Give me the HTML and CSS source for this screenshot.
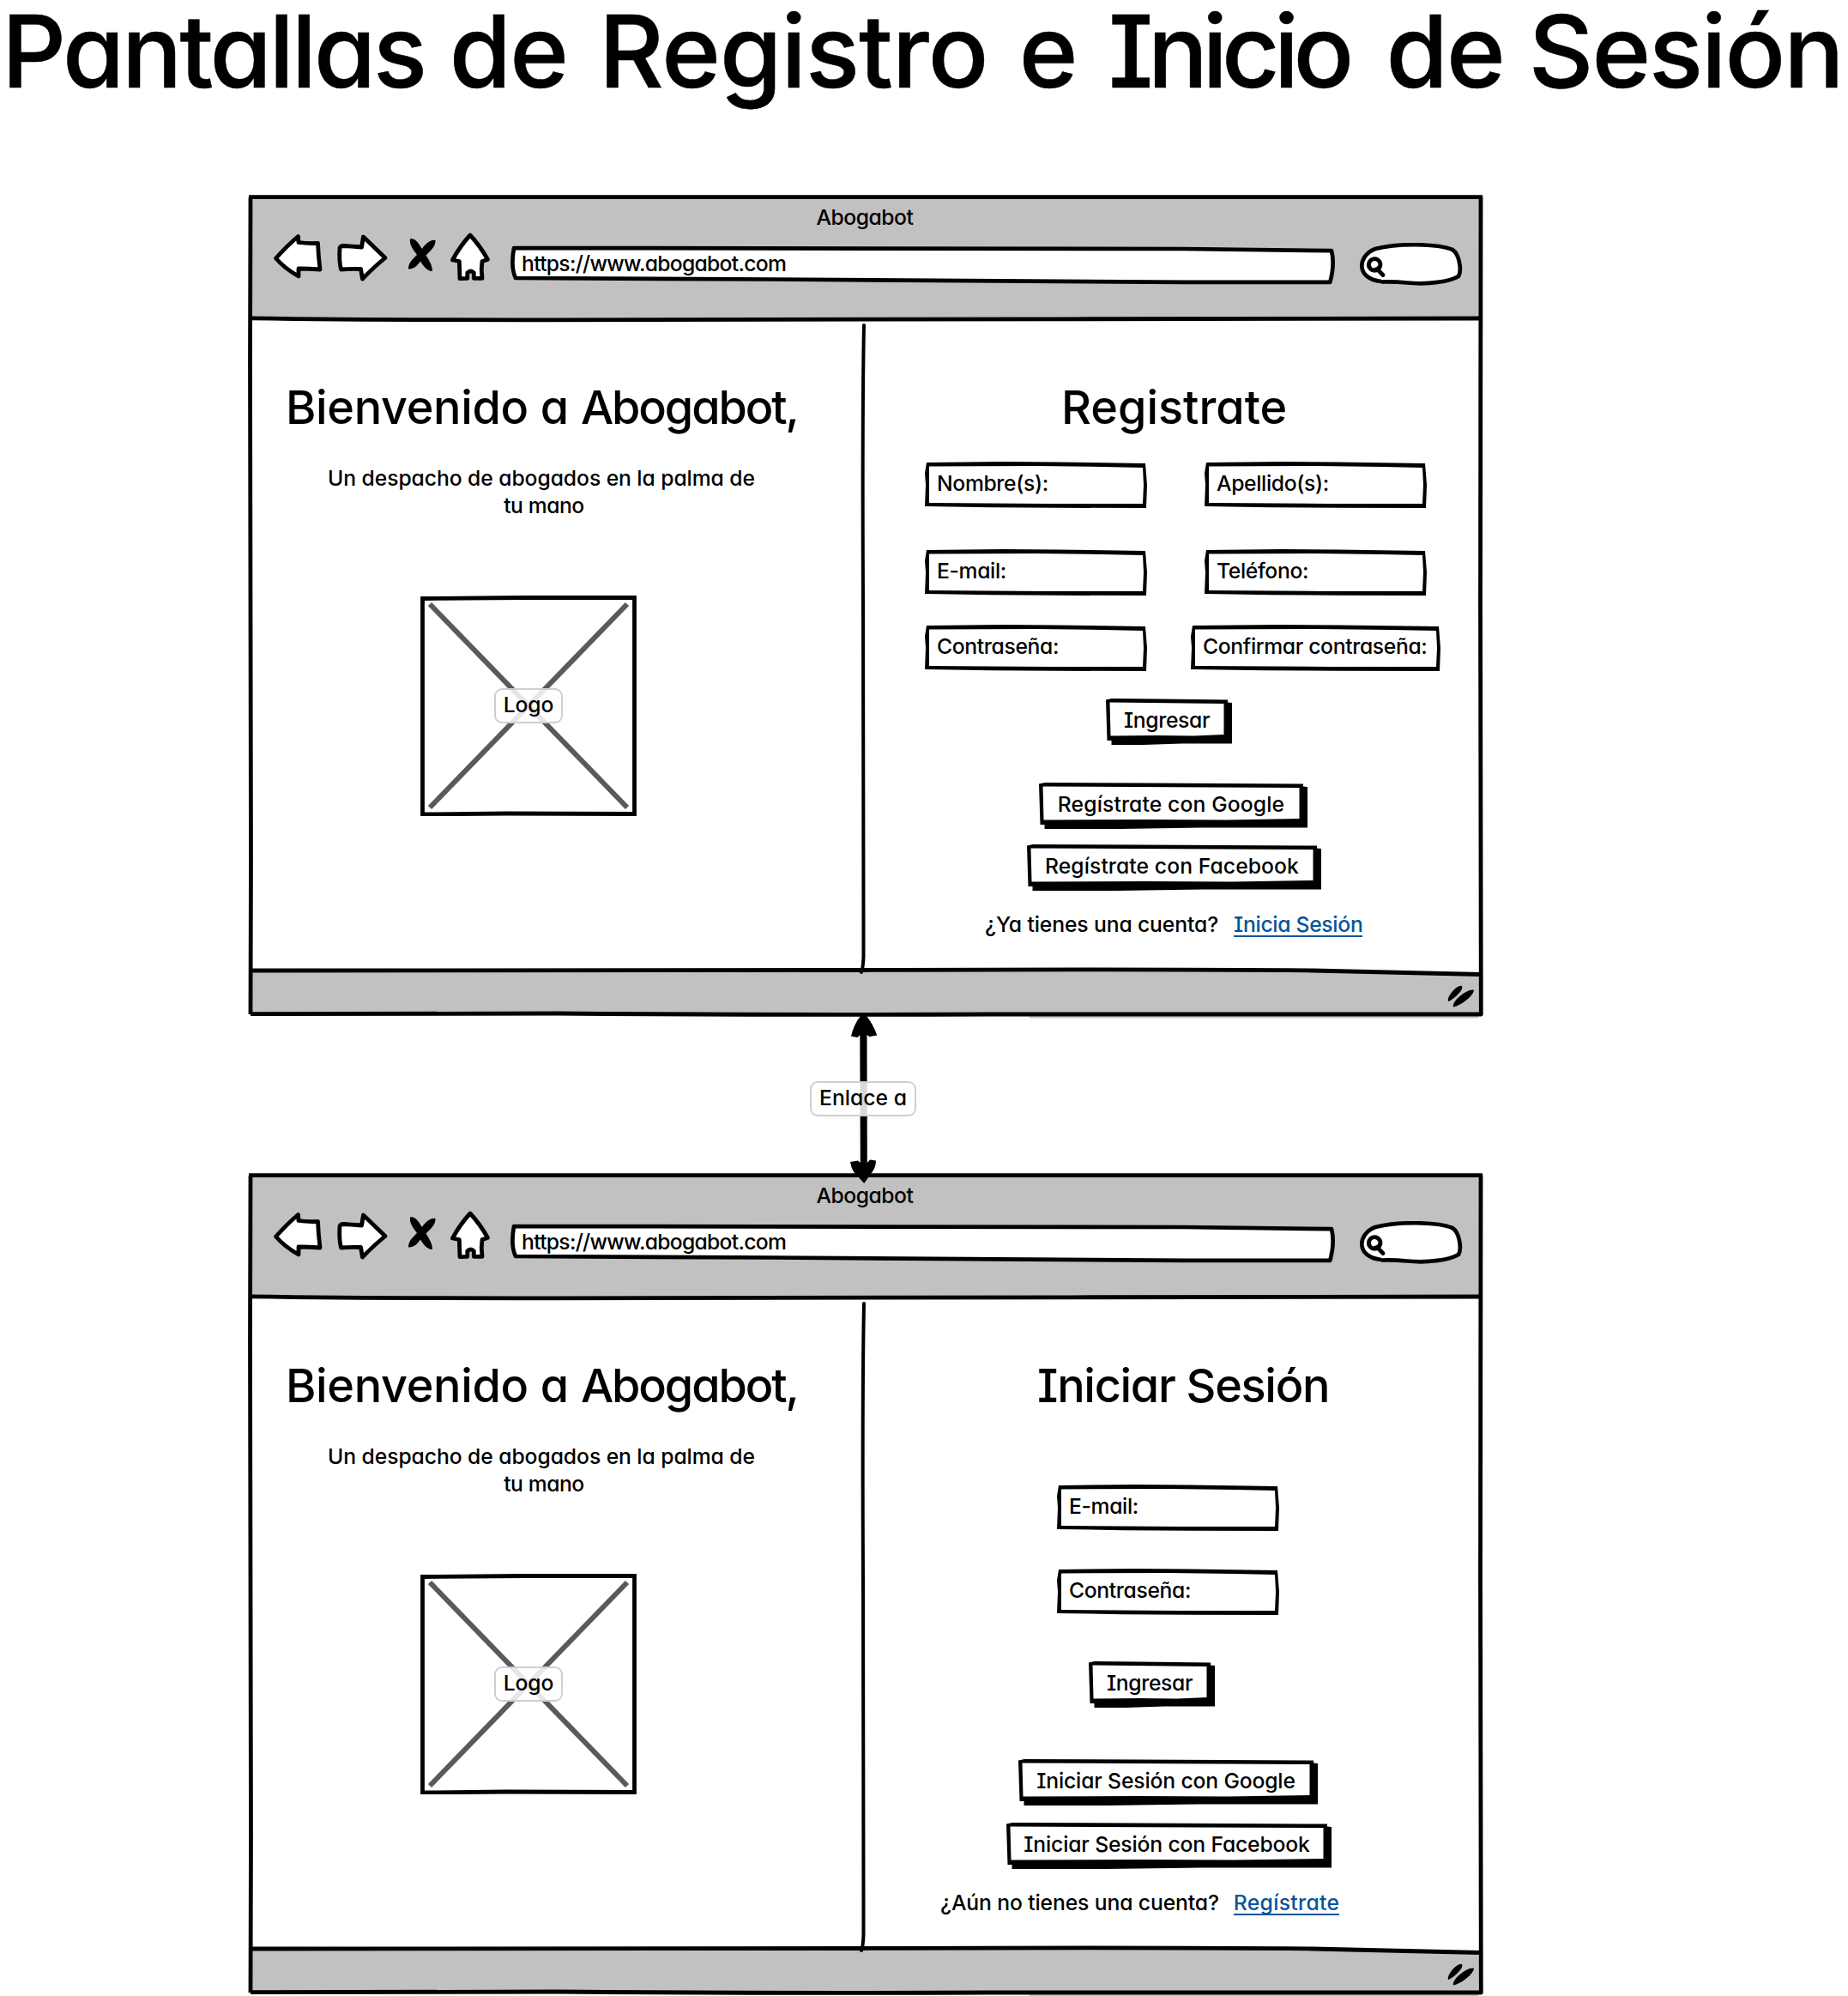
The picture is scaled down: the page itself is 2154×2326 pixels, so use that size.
FILE: index.html
```html
<!DOCTYPE html>
<html lang="es">
<head>
<meta charset="utf-8">
<title>Pantallas de Registro e Inicio de Sesión</title>
<link rel="stylesheet" href="styles.css">
</head>
<body>
<svg class="defs" aria-hidden="true">
  <symbol id="frame" viewBox="290 227 1438 962" overflow="visible">
    <path class="soft" d="M1200 1185.5H1723"/>
    <path class="bar" d="M292 229.7H1726V371L1010 372.5L340 371.5L292 371Z"/>
    <path class="bar" d="M292 1131Q650 1132 1000 1130.5T1530 1131Q1610 1133 1726 1135.5V1182H292Z"/>
    <path class="line" d="M292 230L291.5 420Q293 800 292.5 1000L292 1182"/>
    <path class="line" d="M290 229.7H1728"/>
    <path class="line" d="M1726 229L1725.5 700L1726.3 1182Q1400 1181 1150 1182T650 1181Q450 1182 292 1181.7"/>
    <path class="line" d="M292 370.8Q440 373 640 372.8T1250 371.8T1726 371"/>
    <path class="line" d="M292 1131Q650 1132 1000 1130.5T1530 1131Q1610 1133 1726 1135.5"/>
    <path class="rule" d="M1007 379Q1005 480 1006 700T1006.5 1070V1115Q1006 1128 1004 1133"/>
    <path class="ink" d="M1688 1167C1686 1161 1699 1147 1704 1149C1707 1154 1692 1166 1688 1167ZM1694 1173.500C1692 1166 1712 1151 1718 1154C1717 1162 1700 1173 1694 1173.500Z"/>
  </symbol>
  <symbol id="nav" viewBox="318 270 255 60" overflow="visible">
    <path class="icon" d="M321.500 301Q335 286 347.500 275.500L348 282.500Q358 284 370.500 283.500Q371 298 373 314Q360 313 348 313V322Q332 313 321.500 301Z"/>
    <path class="icon" d="M396 289Q397 286.500 400 286.500Q409 287 421.500 288L423.500 276Q436 288 449 300.500Q436 311 422.500 325L420.500 313.500Q408 313 397.500 314Q395 304 396 289Z"/>
    <path class="ink" d="M478 278.500C484 277 488 284 492 290C496 284 502 279 507.500 280C508 287 502 292 496.500 297.500C500 303 504 309 504 316C497 316 493 309 490 304.500C486 310 482 314 476 313.500C476 306 481 302 486 297C482 291 477 286 478 278.500Z"/>
    <path class="icon" d="M548 274Q560 287 568.500 302.500L562 304.500Q560.500 314 562 324.300H552.300V318Q548.500 314 544.800 318V324.300L536 324.600L535.300 304.500L527.500 303Q536 287 548 274Z"/>
  </symbol>
  <symbol id="urlbar" viewBox="595 286 962 46" overflow="visible">
    <path class="field-shape" d="M599 289Q990 288.500 1380 290L1552 292.200Q1556 308 1550.300 328.800H1380L900 325.500L601 324Q595 312 599 289Z"/>
  </symbol>
  <symbol id="search" viewBox="1585 283 120 50" overflow="visible">
    <path class="field-shape" d="M1610 328C1580 325 1582 298 1603 290C1630 283 1675 284 1693 291C1701 296 1704 315 1700 322C1690 328 1665 332 1640 329.500Q1625 328 1610 328.500"/>
    <path class="glass" d="M1608 312A6.800 6.800 0 1 1 1609 308Q1609 312 1605 313.500L1612 320.500"/>
  </symbol>
</svg>

<h1 class="title"><span class="w1">Pantallas</span> de <span class="w2">Registro</span> <span class="w3">e</span> <span class="w4">Inicio</span> de Sesión</h1>

<section class="window">
  <svg class="frame"><use href="#frame"/></svg>
  <header class="toolbar">
    <div class="caption">Abogabot</div>
    <div class="controls">
      <svg class="nav"><use href="#nav"/></svg>
      <div class="url"><svg class="url-bg"><use href="#urlbar"/></svg><span>https://www.abogabot.com</span></div>
      <svg class="search"><use href="#search"/></svg>
    </div>
  </header>
  <div class="panes">
    <div class="pane welcome">
      <h2>Bienvenido a <span class="brand">Abogabot,</span></h2>
      <p>Un despacho de abogados en la palma de<br><span class="last">tu mano</span></p>
      <div class="logo"><svg class="cross" viewBox="0 0 252 257"><path class="x" d="M11 10L241 247M241 10L11 247"/><path class="box" d="M2.500 3.500L120 2.500H249.500V254.500L100 254L2.500 255Z"/></svg><span class="tag">Logo</span></div>
    </div>
    <div class="pane signup">
      <h2>Registrate</h2>
      <div class="fields">
        <div class="field"><span>Nombre(s):</span></div><div class="field"><span>Apellido(s):</span></div>
        <div class="field"><span>E-mail:</span></div><div class="field"><span>Teléfono:</span></div>
        <div class="field"><span>Contraseña:</span></div><div class="field wide"><span>Confirmar contraseña:</span></div>
      </div>
      <div class="btn enter"><span>Ingresar</span></div>
      <div class="btn google"><span>Regístrate con Google</span></div>
      <div class="btn facebook"><span>Regístrate con Facebook</span></div>
      <div class="switch"><span>¿Ya tienes una cuenta?</span><a>Inicia Sesión</a></div>
    </div>
  </div>
</section>

<div class="connector">
  <svg class="arrow" viewBox="990 1182 34 198"><path class="ink" d="M1006 1182L1010 1184Q1018 1194 1022.300 1206.500L1013.500 1208L1010.500 1206L1010.800 1355L1014 1351.500L1021 1352.500Q1021 1361 1015 1368L1007.200 1379L1000 1371Q993 1366 991 1354L1000 1352.500L1002.800 1355L1002.300 1206L999.500 1209L992 1207.500Q995 1194 1003 1184Z"/></svg>
  <span class="tag link-tag">Enlace a</span>
</div>

<section class="window">
  <svg class="frame"><use href="#frame"/></svg>
  <header class="toolbar">
    <div class="caption">Abogabot</div>
    <div class="controls">
      <svg class="nav"><use href="#nav"/></svg>
      <div class="url"><svg class="url-bg"><use href="#urlbar"/></svg><span>https://www.abogabot.com</span></div>
      <svg class="search"><use href="#search"/></svg>
    </div>
  </header>
  <div class="panes">
    <div class="pane welcome">
      <h2>Bienvenido a <span class="brand">Abogabot,</span></h2>
      <p>Un despacho de abogados en la palma de<br><span class="last">tu mano</span></p>
      <div class="logo"><svg class="cross" viewBox="0 0 252 257"><path class="x" d="M11 10L241 247M241 10L11 247"/><path class="box" d="M2.500 3.500L120 2.500H249.500V254.500L100 254L2.500 255Z"/></svg><span class="tag">Logo</span></div>
    </div>
    <div class="pane login">
      <h2>Iniciar Sesión</h2>
      <div class="field mail"><span>E-mail:</span></div>
      <div class="field pass"><span>Contraseña:</span></div>
      <div class="btn enter"><span>Ingresar</span></div>
      <div class="btn google"><span>Iniciar Sesión con Google</span></div>
      <div class="btn facebook"><span>Iniciar Sesión con Facebook</span></div>
      <div class="switch"><span>¿Aún no tienes una cuenta?</span><a>Regístrate</a></div>
    </div>
  </div>
</section>
</body>
</html>
```
FILE: styles.css
```css
* { box-sizing: border-box; }
body {
  margin: 0;
  width: 2154px;
  height: 2326px;
  overflow: hidden;
  background: #fff;
  color: #000;
  font-family: Inter, "Open Sans", sans-serif;
  font-size: 24.7px;
  font-weight: 450;
  font-feature-settings: "cv11", "cv08";
  white-space: nowrap;
}
h1, h2, p { margin: 0; font-weight: inherit; }
.defs { position: absolute; width: 0; height: 0; }

/* hand-drawn shapes */
.bar { fill: #c1c1c1; }
.soft { stroke: #c4c4c4; stroke-width: 2; fill: none; }
.line { fill: none; stroke: #000; stroke-width: 4.8; stroke-linejoin: round; }
.rule { fill: none; stroke: #000; stroke-width: 4; stroke-linecap: round; }
.ink { fill: #000; }
.icon { fill: #fff; stroke: #000; stroke-width: 4.8; stroke-linejoin: round; }
.field-shape { fill: #fff; stroke: #000; stroke-width: 4.7; stroke-linejoin: round; }
.glass { fill: none; stroke: #000; stroke-width: 4.8; stroke-linecap: round; }

.title {
  height: 227px;
  padding-left: 2px;
  font-size: 117px;
  line-height: 119px;
  font-weight: 500;
  letter-spacing: -2px;
  -webkit-text-stroke: .5px #000;
}
.w1 { letter-spacing: -3.3px; }
.w2 { margin-left: 8px; letter-spacing: -1px; }
.w3 { margin-left: 7px; }
.w4 { margin: 0 15px 0 8px; letter-spacing: -6.8px; }

/* browser window */
.window { position: relative; width: 1438px; height: 957px; margin-left: 290px; }
.frame { position: absolute; left: 0; top: 0; width: 1438px; height: 962px; overflow: visible; }
.toolbar { position: relative; height: 147px; }
.caption { height: 59px; padding: 6px 2px 0 0; text-align: center; line-height: 40px; letter-spacing: -.5px; }
.controls { display: flex; }
.nav { width: 255px; height: 60px; margin: -16px 0 0 28px; overflow: visible; }
.url { position: relative; width: 962px; height: 46px; margin-left: 22px; padding-left: 13px; line-height: 43px; letter-spacing: -.72px; }
.url > span { position: relative; }
.url-bg { position: absolute; left: 0; top: 0; width: 962px; height: 46px; }
.search { width: 120px; height: 50px; margin: -3px 0 0 28px; }

.panes { position: relative; display: flex; height: 760px; }
.pane { display: flex; flex-direction: column; align-items: flex-start; }
.welcome { width: 716px; }
.signup, .login { width: 722px; }
h2 { height: 60px; font-size: 54px; line-height: 60px; font-weight: 500; }
.pane h2 { margin-top: 71px; }

/* left pane */
.welcome h2 { margin-left: 43px; letter-spacing: -.35px; }
.brand { letter-spacing: -2.1px; }
.welcome p { margin: 36px 0 0 91px; width: 500px; line-height: 32px; text-align: center; letter-spacing: -.07px; }
.last { margin-left: 6px; letter-spacing: -.45px; }
.logo { position: relative; display: flex; align-items: center; justify-content: center; width: 252px; height: 257px; margin: 89px 0 0 200px; }
.cross { position: absolute; left: 0; top: 0; width: 252px; height: 257px; }
.x { stroke: #5a5a5a; stroke-width: 6; fill: none; }
.box { stroke: #000; stroke-width: 4.8; fill: none; }
.tag {
  position: relative;
  height: 41px;
  padding: 0 9px;
  border: 2px solid #cfcfcf;
  border-radius: 9px;
  background: rgba(255, 255, 255, .85);
  line-height: 35px;
  text-align: center;
  letter-spacing: -.2px;
}
.link-tag { letter-spacing: 0; }

/* form controls */
.fields {
  display: grid;
  grid-template-columns: 291px 291px;
  grid-template-rows: 102px 88px 54px;
  column-gap: 35px;
  justify-items: center;
  margin: 33px 0 0 56px;
}
.field {
  position: relative;
  width: 259px;
  height: 54px;
  padding-left: 14px;
  line-height: 50px;
  letter-spacing: -.35px;
  background: #000;
  clip-path: polygon(2px 1px, 35% 0, 60% .5px, calc(100% - 2px) 2px, 100% 50%, calc(100% - 1px) 100%, 60% calc(100% - .2px), 30% calc(100% - .8px), 0 calc(100% - 2px), 1px 50%, 0 25%);
}
.field::before {
  content: "";
  position: absolute;
  inset: 0;
  background: #fff;
  clip-path: polygon(5px 5.500px, 50% 5px, 80% 6px, calc(100% - 5px) 7px, calc(100% - 4px) 50%, calc(100% - 5px) calc(100% - 5px), 55% calc(100% - 5px), 5px calc(100% - 6px), 5px 60%);
}
.field.wide { width: 291px; }
.field > span, .btn > span { position: relative; }

.btn {
  position: relative;
  width: 147px;
  height: 54px;
  padding-right: 5px;
  line-height: 50px;
  text-align: center;
  background: #000;
  clip-path: polygon(0 1.500px, 7px 0, 40% .5px, calc(100% - 5px) 1.500px, calc(100% - 5px) 4.500px, 100% 5px, 100% calc(100% - 1.500px), 60% calc(100% - 1.500px), 30% 100%, 6.500px 100%, 6.500px calc(100% - 5px), 1.500px calc(100% - 5px));
}
.btn::before {
  content: "";
  position: absolute;
  inset: 0;
  background: #fff;
  clip-path: polygon(4.500px 4.500px, calc(100% - 9.500px) 6px, calc(100% - 9.500px) calc(100% - 12px), 70% calc(100% - 10.500px), 40% calc(100% - 11px), 5.500px calc(100% - 10.500px));
}
.btn.enter { letter-spacing: -.35px; }
.switch { display: flex; align-items: flex-start; line-height: 40px; letter-spacing: -.12px; }
.switch a { margin-left: 17px; height: 35px; border-bottom: 2px solid #07549a; color: #07549a; }

/* sign-up pane */
.signup h2 { margin-left: 231px; }
.signup .enter { margin: 32px 0 0 283px; }
.signup .google { width: 313px; margin: 44px 0 0 205px; letter-spacing: .12px; }
.signup .facebook { width: 343px; margin: 18px 0 0 191px; letter-spacing: .08px; }
.signup .switch { margin: 19px 0 0 142px; }
.signup .switch a { margin-left: 18px; letter-spacing: -.3px; }

/* login pane */
.login h2 { margin-left: 203px; letter-spacing: -1.3px; }
.login .mail { margin: 85px 0 0 226px; }
.login .pass { margin: 44px 0 0 226px; }
.login .enter { margin: 54px 0 0 263px; }
.login .google { width: 349px; margin: 60px 0 0 181px; letter-spacing: -.15px; }
.login .facebook { width: 379px; margin: 20px 0 0 167px; letter-spacing: -.15px; }
.login .switch { margin: 19px 0 0 90px; }
.login .switch a { letter-spacing: .3px; }

/* link between the two windows */
.connector { position: relative; z-index: 1; display: flex; align-items: center; justify-content: center; width: 122px; height: 183px; margin-left: 945px; padding-top: 9px; }
.arrow { position: absolute; left: 45px; top: -2px; width: 34px; height: 198px; }
```
